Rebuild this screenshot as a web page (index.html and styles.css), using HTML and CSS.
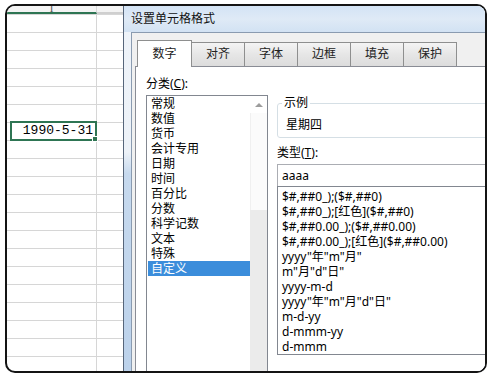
FILE: index.html
```html
<!DOCTYPE html>
<html lang="zh-CN">
<head>
    <meta charset="UTF-8" />
    <title>设置单元格格式</title>
    <link rel="stylesheet" href="styles.css">
</head>
<body>
    <div class="frame">
        <!-- worksheet behind the dialog -->
        <div class="sheet">
            <div class="col-heads">
                <div class="col-head sel">I</div>
                <div class="col-head"></div>
            </div>
            <div class="grid">
                <div class="cell-active">1990-5-31<span class="fill-handle"></span></div>
            </div>
        </div>

        <div class="dialog">
            <div class="titlebar">设置单元格格式</div>
            <div class="client">
                <div class="tabs">
                    <div class="tab active">数字</div>
                    <div class="tab">对齐</div>
                    <div class="tab">字体</div>
                    <div class="tab">边框</div>
                    <div class="tab">填充</div>
                    <div class="tab">保护</div>
                </div>
                <div class="tab-page">
                    <div class="cat-col">
                        <div class="field-label">分类(<u>C</u>):</div>
                        <div class="cat-list">
                            <div class="cat-items">
                                <div class="cat-item">常规</div>
                                <div class="cat-item">数值</div>
                                <div class="cat-item">货币</div>
                                <div class="cat-item">会计专用</div>
                                <div class="cat-item">日期</div>
                                <div class="cat-item">时间</div>
                                <div class="cat-item">百分比</div>
                                <div class="cat-item">分数</div>
                                <div class="cat-item">科学记数</div>
                                <div class="cat-item">文本</div>
                                <div class="cat-item">特殊</div>
                                <div class="cat-item sel">自定义</div>
                            </div>
                            <div class="scrollbar">
                                <div class="sb-up"><span class="arrow-up"></span></div>
                                <div class="sb-thumb"></div>
                            </div>
                        </div>
                    </div>

                    <div class="type-col">
                        <fieldset class="sample">
                            <legend>示例</legend>
                            <div>星期四</div>
                        </fieldset>
                        <div class="field-label type-label">类型(<u>T</u>):</div>
                        <div class="type-input">aaaa</div>
                        <div class="type-list">
                            <div class="type-item">$#,##0_);($#,##0)</div>
                            <div class="type-item">$#,##0_);[红色]($#,##0)</div>
                            <div class="type-item">$#,##0.00_);($#,##0.00)</div>
                            <div class="type-item">$#,##0.00_);[红色]($#,##0.00)</div>
                            <div class="type-item">yyyy"年"m"月"</div>
                            <div class="type-item">m"月"d"日"</div>
                            <div class="type-item">yyyy-m-d</div>
                            <div class="type-item">yyyy"年"m"月"d"日"</div>
                            <div class="type-item">m-d-yy</div>
                            <div class="type-item">d-mmm-yy</div>
                            <div class="type-item">d-mmm</div>
                        </div>
                    </div>
                </div>
            </div>
        </div>
    </div>
</body>
</html>
```

FILE: styles.css
```css
* {
    box-sizing: border-box;
}
body {
    margin: 0;
    background: #fff;
    font-family: "Noto Sans", "Noto Sans CJK SC", sans-serif;
    font-size: 12px;
    color: #000;
}
.frame {
    margin: 4px 0 0 5px;
    width: 482px;
    height: 369px;
    border: 2px solid #141414;
    border-radius: 10px;
    overflow: hidden;
    display: flex;
}

/* worksheet */
.sheet {
    width: 116px;
    flex: none;
    display: flex;
    flex-direction: column;
}
.col-heads {
    display: flex;
    height: 8px;
}
.col-head {
    flex: 1;
    height: 8px;
    background: #f3f3f3;
    border-bottom: 2px solid #cfcfcf;
    overflow: hidden;
    font-family: "Liberation Serif", serif;
    font-size: 11px;
    line-height: 4px;
    color: #555;
    text-align: center;
}
.col-head.sel {
    flex: none;
    width: 90px;
    border-right: 1px solid #d6d6d6;
    border-bottom-color: #2e7553;
}
.grid {
    flex: 1;
    background:
        linear-gradient(to right, transparent 89px, #d6d6d6 89px 90px, transparent 90px),
        linear-gradient(transparent 17px, #d6d6d6 17px) 0 1px / 100% 18px;
}
.cell-active {
    position: relative;
    margin: 107px 0 0 3px;
    width: 87px;
    height: 20px;
    border: 2px solid #2e7553;
    background: #fff;
    padding-right: 2px;
    text-align: right;
    font-family: "Liberation Mono", monospace;
    font-size: 13px;
    line-height: 16px;
}
.fill-handle {
    position: absolute;
    right: -3px;
    bottom: -3px;
    width: 6px;
    height: 6px;
    background: #2e7553;
    border: 1px solid #fff;
}

/* dialog */
.dialog {
    flex: none;
    width: 400px;
    display: flex;
    flex-direction: column;
    border-left: 1px solid #56657a;
    background: linear-gradient(#eef3f9, #edf2f8 40%, #c6d9ee 46%, #bcd2eb);
}
.titlebar {
    height: 26px;
    padding-left: 7px;
    line-height: 26px;
    color: #111;
    background: linear-gradient(#d3e3f5, #dfeaf6 50%, #d2e2f3);
}
.client {
    flex: 1;
    margin-left: 7px;
    border-top: 1px solid #8a9bb0;
    border-left: 1px solid #8a9bb0;
    background: #f0f0f0;
    padding-left: 3px;
    display: flex;
    flex-direction: column;
}
.tabs {
    display: flex;
    align-items: flex-end;
    height: 33px;
    padding-left: 2px;
    position: relative;
    z-index: 1;
}
.tab {
    width: 54px;
    height: 24px;
    margin-left: -1px;
    border: 1px solid #8e8f8f;
    border-bottom: none;
    background: linear-gradient(#f4f4f4, #e6e6e6 50%, #dcdcdc);
    text-align: center;
    line-height: 22px;
    color: #222;
}
.tab.active {
    width: 55px;
    height: 27px;
    margin-left: 0;
    margin-bottom: -1px;
    background: #fff;
    line-height: 26px;
}
.tab-page {
    flex: 1;
    display: flex;
    gap: 9px;
    padding: 8px 0 0 10px;
    background: #fff;
    border: 1px solid #898c95;
}
.field-label {
    height: 20px;
    line-height: 18px;
    white-space: nowrap;
}
.cat-col {
    width: 122px;
    flex: none;
}
.cat-list {
    height: 300px;
    border: 1px solid #828790;
    display: flex;
}
.cat-items {
    flex: 1;
}
.cat-item {
    height: 15px;
    line-height: 15px;
    margin-left: 1px;
    padding-left: 3px;
    white-space: nowrap;
}
.cat-item.sel {
    background: #3b8ddb;
    color: #fff;
}
.scrollbar {
    width: 17px;
    flex: none;
    background: #ebebeb;
    display: flex;
    flex-direction: column;
}
.sb-up {
    height: 17px;
    background: #fff;
    display: flex;
    align-items: center;
    justify-content: center;
}
.arrow-up {
    width: 0;
    height: 0;
    border-left: 4px solid transparent;
    border-right: 4px solid transparent;
    border-bottom: 4px solid #9c9c9c;
}
.sb-thumb {
    height: 97px;
    background: #fbfbfb;
    border-left: 1px solid #f0f0f0;
}
.type-col {
    width: 220px;
    flex: none;
    display: flex;
    flex-direction: column;
}
.sample {
    margin: 20px 0 0;
    padding: 6px 8px 4px;
    min-width: 0;
    border: 1px solid #d5dfe5;
    border-radius: 3px;
    line-height: 16px;
}
.sample legend {
    margin-left: -4px;
    padding: 0 2px;
    line-height: 16px;
}
.type-label {
    margin-top: 6px;
}
.type-input {
    height: 23px;
    border: 1px solid #abadb3;
    padding-left: 4px;
    line-height: 21px;
}
.type-list {
    margin-top: -1px;
    padding-top: 2px;
    border: 1px solid #828790;
}
.type-item {
    height: 15px;
    line-height: 15px;
    padding-left: 4px;
    white-space: nowrap;
}
```
